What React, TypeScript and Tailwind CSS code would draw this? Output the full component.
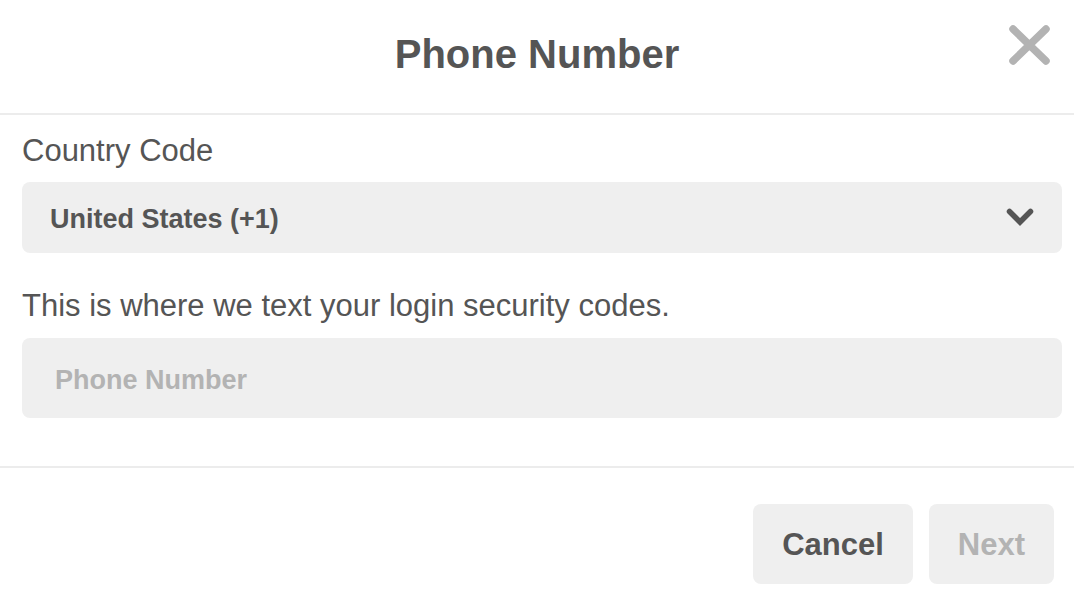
import React from "react";

function CloseIcon() {
  return (
    <svg width="41" height="40" viewBox="0 0 41 40" fill="none">
      <path d="M4 4L37 36M37 4L4 36" stroke="#b3b3b3" strokeWidth="7.5" strokeLinecap="round" />
    </svg>
  );
}

function ChevronIcon() {
  return (
    <svg width="28" height="20" viewBox="0 0 28 20" fill="none">
      <polyline points="3.5,3.5 14,14 24.5,3.5" stroke="#555555" strokeWidth="5.5" strokeLinecap="round" strokeLinejoin="miter" />
    </svg>
  );
}

export default function App() {
  return (
    <div className="w-[1074px] h-[606px] bg-white text-[#555555] font-['Liberation_Sans',Arial,sans-serif] overflow-hidden">
      {/* Header */}
      <header className="relative h-[115px] border-b-2 border-[#ececec] pt-[34px] text-center">
        <h1 className="text-[40px] leading-[40px] font-bold">Phone Number</h1>
        <button className="absolute right-[24px] top-[25px]" aria-label="Close">
          <CloseIcon />
        </button>
      </header>

      {/* Body */}
      <div className="pl-[22px] pr-[12px] pt-[20px] pb-[48px] border-b-2 border-[#ececec]">
        <label className="block text-[31px] leading-[31px]">Country Code</label>
        <div className="mt-[16px] h-[71px] rounded-lg bg-[#efefef] flex items-center justify-between pl-[28px] pr-[28px]">
          <span className="pt-[3px] text-[27px] leading-[27px] font-bold">United States (+1)</span>
          <ChevronIcon />
        </div>

        <p className="mt-[37px] text-[31px] leading-[31px]">
          This is where we text your login security codes.
        </p>
        <input
          type="text"
          placeholder="Phone Number"
          className="mt-[17px] block w-full h-[80px] rounded-lg bg-[#efefef] pl-[33px] pt-[4px] text-[27px] font-bold outline-none placeholder:text-[#b3b3b3]"
        />
      </div>

      {/* Footer */}
      <div className="flex justify-end gap-4 pt-[36px] pr-[20px]">
        <button className="h-[80px] px-[29px] pt-[3px] rounded-lg bg-[#efefef] text-[31px] font-bold text-[#555555]">
          Cancel
        </button>
        <button className="h-[80px] px-[29px] pt-[3px] rounded-lg bg-[#efefef] text-[31px] font-bold text-[#b3b3b3]">
          Next
        </button>
      </div>
    </div>
  );
}
